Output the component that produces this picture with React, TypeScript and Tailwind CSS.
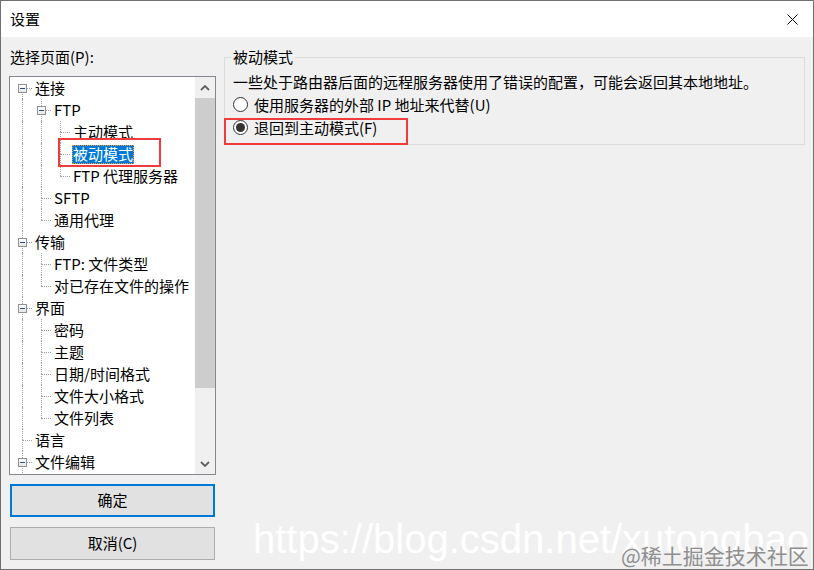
import React from 'react';

type Node = {
  label: string;
  level: number;
  last: boolean;
  expander?: boolean;
  open: boolean[];
  selected?: boolean;
  first?: boolean;
};

// open[i] = ancestor line at level i keeps going past this row
const tree: Node[] = [
  { label: '连接', level: 0, last: false, expander: true, open: [], first: true },
  { label: 'FTP', level: 1, last: false, expander: true, open: [true] },
  { label: '主动模式', level: 2, last: false, open: [true, true] },
  { label: '被动模式', level: 2, last: false, open: [true, true], selected: true },
  { label: 'FTP 代理服务器', level: 2, last: true, open: [true, true] },
  { label: 'SFTP', level: 1, last: false, open: [true] },
  { label: '通用代理', level: 1, last: true, open: [true] },
  { label: '传输', level: 0, last: false, expander: true, open: [] },
  { label: 'FTP: 文件类型', level: 1, last: false, open: [true] },
  { label: '对已存在文件的操作', level: 1, last: true, open: [true] },
  { label: '界面', level: 0, last: false, expander: true, open: [] },
  { label: '密码', level: 1, last: false, open: [true] },
  { label: '主题', level: 1, last: false, open: [true] },
  { label: '日期/时间格式', level: 1, last: false, open: [true] },
  { label: '文件大小格式', level: 1, last: false, open: [true] },
  { label: '文件列表', level: 1, last: true, open: [true] },
  { label: '语言', level: 0, last: false, open: [] },
  { label: '文件编辑', level: 0, last: false, expander: true, open: [] },
];

const dotV = 'absolute left-[9px] w-0 border-l border-dotted border-[#a0a0a0]';

function TreeRow({ node }: { node: Node }) {
  const cells = [];
  for (let i = 0; i < node.level; i++) {
    cells.push(
      <div key={i} className="relative w-[19px] h-full shrink-0">
        {node.open[i] && <div className={`${dotV} top-0 bottom-0`} />}
      </div>
    );
  }
  cells.push(
    <div key="own" className="relative w-[19px] h-full shrink-0">
      {!node.first && <div className={`${dotV} top-0 h-[11px]`} />}
      {!node.last && <div className={`${dotV} top-[11px] bottom-0`} />}
      <div className="absolute left-[9px] right-0 top-[11px] h-0 border-t border-dotted border-[#a0a0a0]" />
      {node.expander && (
        <div className="absolute left-[5px] top-[7px] w-[9px] h-[9px] border border-[#919191] bg-gradient-to-b from-white to-[#e6e6e6] flex items-center justify-center">
          <div className="w-[5px] h-[1px] bg-[#2c4a7c]" />
        </div>
      )}
    </div>
  );

  return (
    <div className="flex items-center h-[22px] pl-[3px]">
      {cells}
      {node.selected ? (
        <span className="ml-[2px] h-[19px] leading-[18px] px-[1px] bg-[#0078d7] text-white outline outline-1 outline-dotted outline-[#f0a030] -outline-offset-1 whitespace-nowrap">
          {node.label}
        </span>
      ) : (
        <span className="ml-[3px] leading-[22px] text-black whitespace-nowrap">{node.label}</span>
      )}
    </div>
  );
}

function Chevron({ down }: { down?: boolean }) {
  return (
    <svg width="10" height="6" viewBox="0 0 10 6">
      <polyline
        points={down ? '1,1 5,5 9,1' : '1,5 5,1 9,5'}
        fill="none"
        stroke="#606060"
        strokeWidth="1.8"
      />
    </svg>
  );
}

function Radio({ checked, label }: { checked?: boolean; label: string }) {
  return (
    <div className="flex items-center h-[23px]">
      <div className="w-[15px] h-[15px] rounded-full border border-[#333] bg-white flex items-center justify-center shrink-0">
        {checked && <div className="w-[9px] h-[9px] rounded-full bg-[#333]" />}
      </div>
      <span className="ml-[6px] leading-[23px]">{label}</span>
    </div>
  );
}

export default function App() {
  return (
    <div
      className="relative w-[814px] h-[570px] border border-[#707070] bg-[#f0f0f0] flex flex-col overflow-hidden text-[15px] text-black"
      style={{ fontFamily: '"Noto Sans CJK SC", "Noto Sans", sans-serif' }}
    >
      <div className="h-[36px] bg-white flex items-center justify-between pl-[9px] pr-[15px] shrink-0">
        <span className="leading-[20px]">设置</span>
        <svg width="11" height="11" viewBox="0 0 11 11">
          <path d="M0.5 0.5 L10.5 10.5 M10.5 0.5 L0.5 10.5" stroke="#000" strokeWidth="1" />
        </svg>
      </div>

      <div className="flex flex-1">
        <div className="w-[215px] pl-[8px] pt-[10px] flex flex-col shrink-0">
          <div className="leading-[20px] pl-[1px]">选择页面(P):</div>
          <div className="mt-[9px] h-[399px] border border-[#828790] bg-white flex">
            <div className="flex-1 overflow-hidden">
              {tree.map((n) => (
                <TreeRow key={n.label} node={n} />
              ))}
            </div>
            <div className="w-[20px] bg-[#f0f0f0] flex flex-col">
              <div className="h-[21px] flex items-center justify-center">
                <Chevron />
              </div>
              <div className="h-[290px] bg-[#cdcdcd]" />
              <div className="flex-1" />
              <div className="h-[21px] flex items-center justify-center">
                <Chevron down />
              </div>
            </div>
          </div>
          <button className="mt-[9px] ml-[1px] w-[205px] h-[33px] border-2 border-[#0078d7] bg-[#e1e1e1] text-[15px]">
            确定
          </button>
          <button className="mt-[10px] ml-[1px] w-[205px] h-[33px] border border-[#adadad] bg-[#e1e1e1] text-[15px]">
            取消(C)
          </button>
        </div>

        <div className="flex-1 pl-[8px] pt-[10px] pr-[8px]">
          <fieldset className="w-[581px] border border-[#dcdcdc] pl-[8px] pb-[5px]">
            <legend className="-ml-[2px] px-[2px] leading-[20px]">被动模式</legend>
            <div className="leading-[23px] mt-[3px]">一些处于路由器后面的远程服务器使用了错误的配置，可能会返回其本地地址。</div>
            <Radio label="使用服务器的外部 IP 地址来代替(U)" />
            <Radio checked label="退回到主动模式(F)" />
          </fieldset>
        </div>
      </div>

      {/* annotation boxes drawn over the dialog */}
      <div className="absolute left-[57px] top-[137px] w-[103px] h-[29px] border-2 border-[#ef3b3b]" />
      <div className="absolute left-[223px] top-[117px] w-[184px] h-[27px] border-2 border-[#ef3b3b]" />

      {/* watermarks */}
      <div
        className="absolute left-[252px] top-[518px] text-[40px] leading-[40px] text-white whitespace-nowrap"
        style={{ fontFamily: '"Liberation Sans", Arial, sans-serif' }}
      >
        https://blog.csdn.net/xutongbao
      </div>
      <div className="absolute left-[620px] top-[543px] text-[21px] leading-[22px] text-[#8f8f8f] whitespace-nowrap">
        @稀土掘金技术社区
      </div>
    </div>
  );
}
